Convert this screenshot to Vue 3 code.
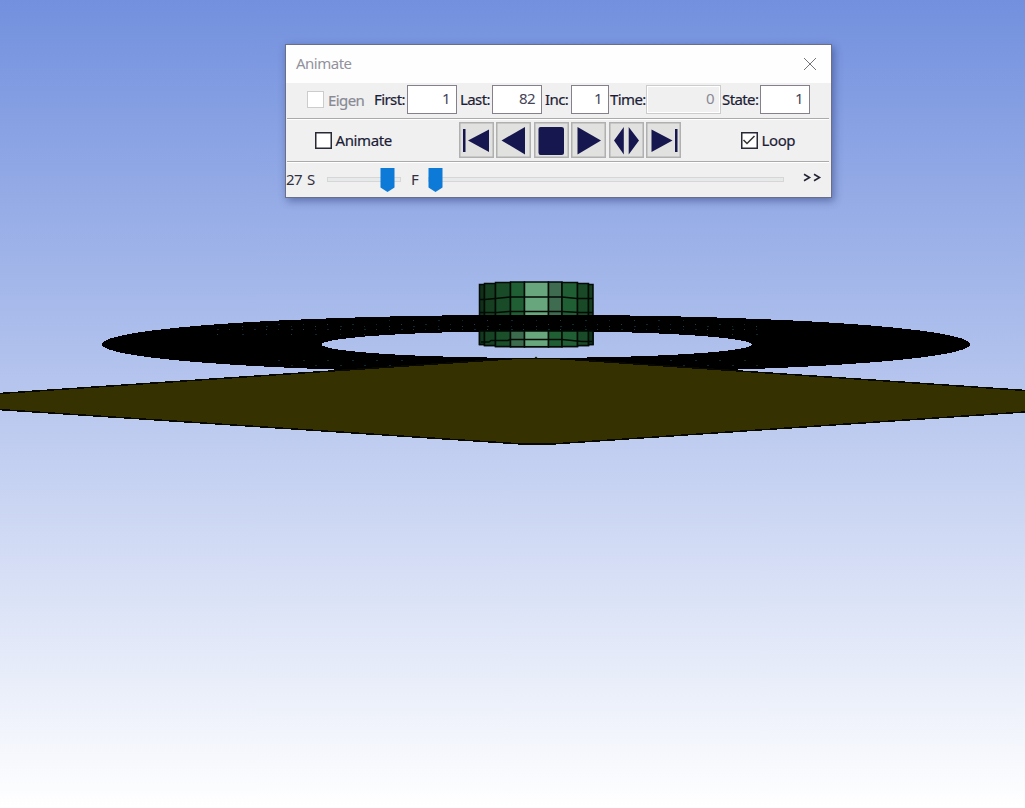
<script setup>
const columns = [
  [479.5, 484.5, 284.5, 344.5, '#10301a', '#133a20'],
  [484.5, 495.5, 283.5, 345.5, '#163f22', '#174325'],
  [495.5, 510.5, 282.5, 346.5, '#1a4b29', '#1a4f2a'],
  [510.5, 524.5, 282, 346.7, '#205f34', '#3c6c4e'],
  [524.5, 548.5, 282, 346.7, '#68a67e', '#68a67e'],
  [548.5, 562, 282, 346.7, '#3f6b50', '#205f34'],
  [562, 577.5, 282.5, 346.5, '#205f34', '#205f34'],
  [577.5, 588.5, 283.5, 345.5, '#194927', '#1a4b29'],
  [588.5, 593, 284.5, 344.5, '#163f22', '#12361d']
]
const rings = ['M479 299.5H484.5L495.5 298.5L511 297H562L577 298.5H593', 'M480 312.5H497L509 311.5H562L580 312.5H593', 'M481 342H489L491 340.5H508L510 339.5H562L582 341.5H592']
const specks = []
for (let i = 0; i < 45; i++) {
  const x = 217 + i * 12.25
  const edge = Math.abs(x - 536) / 434
  const top = 344.3 - 29.5 * Math.sqrt(1 - edge * edge)
  for (const [row, y] of [320, 324, 326, 329, 334].entries()) {
    if (y > top + 3 && (row === 3 || (row + i) % 2 === 0) && (y < 330 || Math.abs(x - 536) > 165)) specks.push([Math.round(x), y, (i + row) % 3])
  }
  if (Math.abs(x - 536) > 125 && Math.abs(x - 536) < 260) specks.push([Math.round(x), i % 2 ? 360 : 365, 0])
}
const icons = [
  'M4 6H6.5V29H4ZM9 17.5L30 6.5V29Z',
  'M5.500 17.500L29 4V31.500Z',
  'M6.500 4H27.500Q30 4 30 6V29.500Q30 32 27.500 32H6.500Q4.500 32 4.500 29.500V6Q4.500 4 6.500 4Z',
  'M6.500 4L30 17.500L6.500 31.500Z',
  'M5 17.500L14.800 4V31.500ZM19.700 4L30 17.500L19.700 31.500Z',
  'M5.500 6.500L26.500 17.500L5.500 29ZM29 6H31.500V29H29Z'
]
</script>

<template>
  <main class="viewport">
    <svg class="scene" width="1025" height="808" viewBox="0 0 1025 808">
      <g stroke="#020a04" stroke-width="1.5">
        <rect v-for="(c, i) in columns" :key="i" :x="c[0]" :y="c[2]" :width="c[1] - c[0]" :height="c[3] - c[2]" :fill="c[4]" />
        <path v-for="r in rings.slice(0, 2)" :key="r" :d="r" fill="none" />
      </g>
      <path fill="#000" fill-rule="evenodd" shape-rendering="crispEdges" d="M102 344.300A434 29.500 0 0 1 970 344.300A434 28.500 0 0 1 102 344.300ZM321.500 344.500A215.300 13.700 0 0 0 752 344.500A215.300 13.700 0 0 0 321.500 344.500Z" />
      <path fill="#000" d="M479 315.500H594V331H479Z" />
      <g stroke="#020a04" stroke-width="1.5">
        <rect v-for="(c, i) in columns" :key="'f' + i" :x="c[0]" y="331" :width="c[1] - c[0]" :height="c[3] - 331" :fill="c[5]" />
        <path :d="rings[2]" fill="none" />
      </g>
      <rect v-for="(s, i) in specks" :key="'s' + i" :x="s[0]" :y="s[1]" :width="s[2] ? 1 : 2" height="1" :fill="s[2] === 1 ? '#2c3840' : '#0c2831'" />
      <path fill="#353100" stroke="#080800" stroke-width="1.500" shape-rendering="crispEdges" d="M-20 394.800L516 358.500H556L1045 391.800V410.600L552 444H522L-20 408.300Z" />
      <path fill="#101000" d="M534 358.500L536 356.500L538 358.500Z" />
    </svg>

    <section class="dialog">
      <header class="titlebar">
        <span class="title">Animate</span>
        <svg width="14" height="14" viewBox="0 0 14 14"><path d="M1 1L13 13M13 1L1 13" stroke="#77727a" stroke-width="1" /></svg>
      </header>
      <div class="row fields">
        <span class="check off"></span>
        <label class="eigen">Eigen</label>
        <label class="first">First:</label><span class="input">1</span>
        <label class="last">Last:</label><span class="input">82</span>
        <label class="inc">Inc:</label><span class="input short">1</span>
        <label class="time">Time:</label><span class="input disabled">0</span>
        <label class="state">State:</label><span class="input">1</span>
      </div>
      <div class="row controls">
        <span class="check"></span>
        <label class="animate">Animate</label>
        <div class="buttons">
          <button v-for="icon in icons" :key="icon">
            <svg width="35" height="35" viewBox="0 0 35 35"><path :d="icon" fill="#17174f" /></svg>
          </button>
        </div>
        <span class="check loopbox"><svg width="14" height="14" viewBox="0 0 14 14"><path d="M1.500 7L5 10.500L12.500 3" fill="none" stroke="#333" stroke-width="1.500" /></svg></span>
        <label class="loop">Loop</label>
      </div>
      <div class="row sliders">
        <span class="count">27</span><span class="speed">S</span>
        <div class="slider small"><svg class="thumb" width="15" height="24" viewBox="0 0 15 24"><path d="M.5 0H14.500V19.500L7.500 24L.5 19.500Z" fill="#0e7ad7" /></svg></div>
        <span class="frame">F</span>
        <div class="slider big"><svg class="thumb" width="15" height="24" viewBox="0 0 15 24"><path d="M.5 0H14.500V19.500L7.500 24L.5 19.500Z" fill="#0e7ad7" /></svg></div>
        <svg class="more" width="19" height="10" viewBox="0 0 19 10"><path d="M1 1.300L6.500 4.500L1 7.700M11 1.300L16.500 4.500L11 7.700" fill="none" stroke="#252535" stroke-width="1.600" /></svg>
      </div>
    </section>
  </main>
</template>

<style>
body { margin: 0; overflow: hidden; }
</style>
<style scoped>
* { box-sizing: border-box; }
.viewport { position: relative; width: 1025px; height: 808px; padding: 44px 0 0 285px; overflow: hidden; background: linear-gradient(#7290de, #fff); font: 15px "Noto Sans", sans-serif; color: #1c1c36; }
.scene { position: absolute; left: 0; top: 0; }
.dialog { position: relative; width: 547px; height: 154px; border: 1px solid #696f88; background: #f0f0f0; box-shadow: 2px 3px 8px rgba(25, 40, 100, .45); }
.titlebar { height: 38px; background: #fefefe; display: flex; align-items: center; justify-content: space-between; padding: 0 14px 0 10px; }
.title { color: #92929c; font-size: 15px; letter-spacing: -.5px; padding-bottom: 2px; }
.row { display: flex; align-items: center; white-space: nowrap; }
label { flex: none; line-height: 20px; font-size: 15px; letter-spacing: -.6px; -webkit-text-stroke: .2px currentColor; }
.fields { height: 36px; margin: 0 2px 0 1px; padding: 0 0 2px 20px; border-bottom: 1px solid #aaa; box-shadow: 0 1px #fff; }
.fields label { padding-bottom: 2px; }
.fields .eigen { padding-bottom: 0; }
.controls { height: 43px; margin: 0 2px 0 1px; padding-left: 27.5px; border-bottom: 1px solid #aaa; box-shadow: 0 1px #fff; }
.check { flex: none; width: 17px; height: 17px; border: 1px solid #292936; background: #fff; box-shadow: inset 0 0 0 .5px #292936; }
.check svg { display: block; }
.fields .off { border-color: #ccc; box-shadow: none; }
.eigen { width: 46px; margin-left: 4px; color: #898994; }
.first { width: 33px; }
.last { width: 32px; margin-left: 3px; }
.inc { width: 26px; margin-left: 3px; }
.time { width: 36px; margin-left: 1px; }
.state { width: 38px; margin-left: 1px; }
.input { flex: none; width: 50px; height: 29px; padding-right: 6px; border: 1px solid #85808b; background: #fff; text-align: right; line-height: 24px; font-size: 15px; letter-spacing: -.6px; color: #454557; }
.short { width: 38px; }
.disabled { width: 75px; border-color: #ccc; background: #f0f0f0; box-shadow: inset 0 0 0 1px #fff; color: #898994; }
.controls .animate { width: 123px; margin-left: 4px; letter-spacing: -.4px; }
.buttons { display: flex; gap: 2.5px; }
button { width: 35px; height: 36px; padding: 0; border: 1px solid #b0b0b0; background: #e1e1df; box-shadow: inset 0 0 0 .5px #b0b0b0; overflow: hidden; }
button svg { display: block; margin: -1px; }
.loopbox { margin-left: 59.5px; }
.controls .loop { margin-left: 4px; letter-spacing: -.4px; }
.sliders { height: 34px; }
.sliders span { font-size: 15px; letter-spacing: -.6px; color: #303044; }
.count { width: 21px; }
.speed { width: 20px; }
.slider { position: relative; height: 5px; border: 1px solid #d6d6d6; background: #e7eaea; }
.small { width: 74px; }
.big { width: 356px; }
.thumb { position: absolute; top: -10px; }
.small .thumb { left: 52px; }
.big .thumb { left: -1px; }
.frame { width: 17px; margin-left: 10px; }
.more { margin: -3px 0 0 18.5px; }
</style>
